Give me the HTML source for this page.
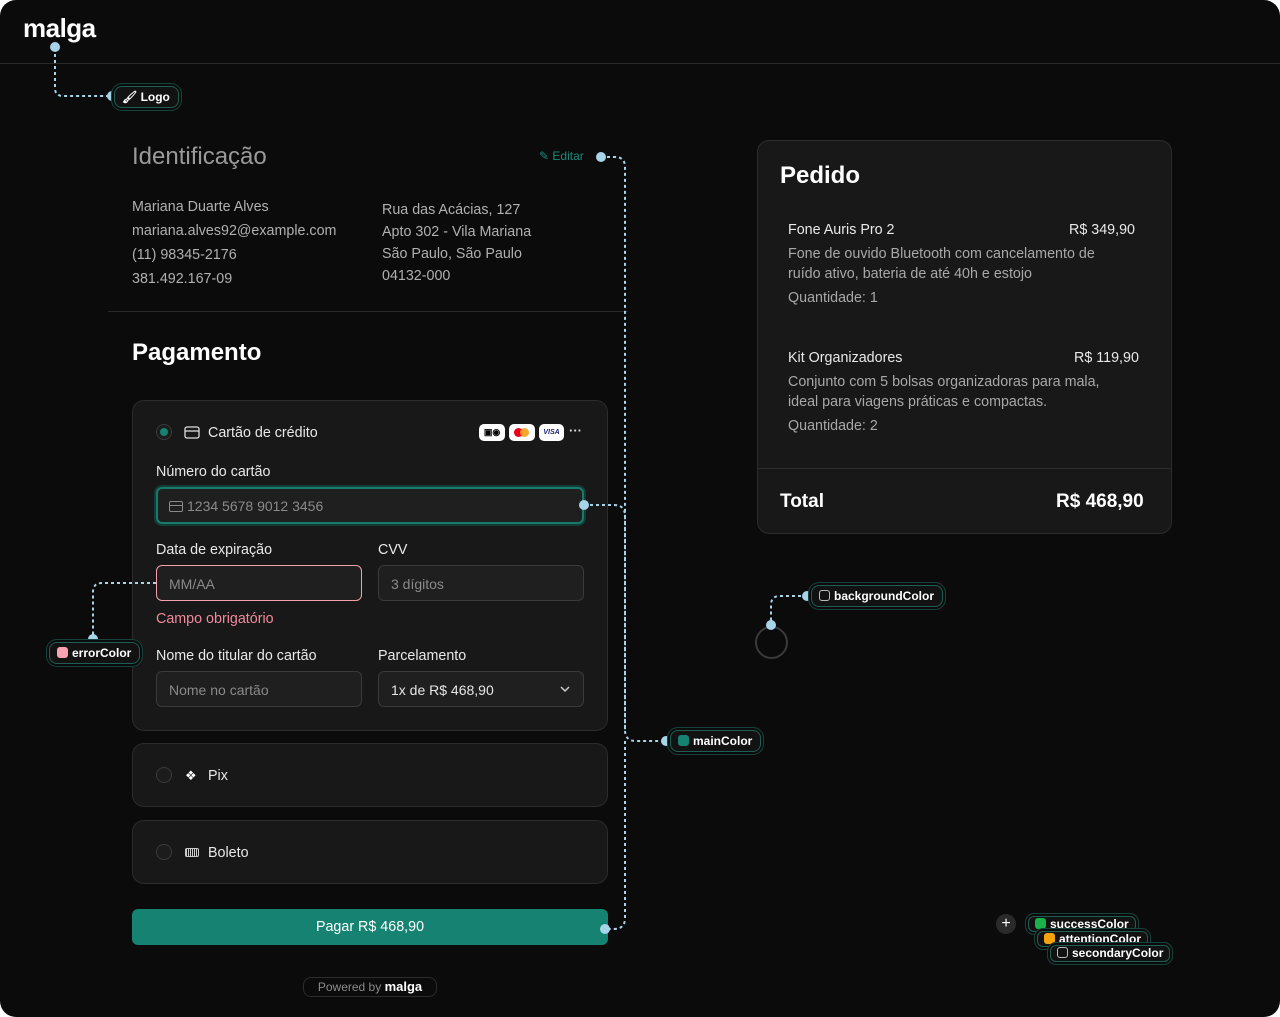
<!DOCTYPE html>
<html><head><meta charset="utf-8"><style>
*{box-sizing:border-box;margin:0;padding:0}
body{width:1280px;height:1017px;background:#fff;font-family:"Liberation Sans",sans-serif;position:relative;overflow:hidden;color:#e6e6e6}
.frame{position:absolute;left:0;top:0;width:1280px;height:1017px;background:#0b0b0b;border-radius:16px}
.a{position:absolute;white-space:nowrap}
.card{position:absolute;background:#181818;border:1px solid #2c2c2c;border-radius:12px}
.inp{position:absolute;background:#1f1f1f;border:1px solid #3a3a3a;border-radius:6px;height:36px;font-size:14px;color:#8a8a8a;padding:10px 12px}
.lbl{font-size:14.3px;color:#e8e8e8}
.g{color:#a8a8a8;font-size:14.3px}
.radio{position:absolute;width:16px;height:16px;border-radius:50%;border:1px solid #3a3a3a;background:#1c1c1c}
.tag{position:absolute;height:22px;border:1px solid #1f5e53;border-radius:8px;background:#121212;box-shadow:0 0 0 2px #0b0b0b,0 0 0 3px #16443c;font-size:12px;font-weight:bold;color:#fff;padding:3px 8px 0 7px;white-space:nowrap}
.sm{height:16px;padding:0 6px;line-height:14px;border-radius:6px}
.sw{display:inline-block;width:11px;height:11px;border-radius:3px;vertical-align:-1px;margin-right:4px}
</style></head><body>
<div class="frame"></div>
<div class="a" style="left:23px;top:13px;font-size:26px;font-weight:bold;color:#fff;letter-spacing:-0.5px">malga</div>
<div class="a" style="left:0;top:63px;width:1280px;height:1px;background:#2a2a2a"></div>

<div class="a" style="left:132px;top:143px;font-size:24px;color:#9a9a9a">Identificação</div>
<div class="a" style="left:539px;top:149px;font-size:12px;color:#1c8a78">✎ Editar</div>
<div class="a g" style="left:132px;top:195px;line-height:24px;color:#b0b0b0">Mariana Duarte Alves<br>mariana.alves92@example.com<br>(11) 98345-2176<br>381.492.167-09</div>
<div class="a g" style="left:382px;top:199px;line-height:22px;color:#b0b0b0">Rua das Acácias, 127<br>Apto 302 - Vila Mariana<br>São Paulo, São Paulo<br>04132-000</div>
<div class="a" style="left:108px;top:311px;width:520px;height:1px;background:#2a2a2a"></div>
<div class="a" style="left:132px;top:339px;font-size:24px;font-weight:bold;color:#fff">Pagamento</div>

<div class="card" style="left:132px;top:400px;width:476px;height:331px"></div>
<div class="radio" style="left:156px;top:424px"><div style="position:absolute;left:3px;top:3px;width:8px;height:8px;border-radius:50%;background:#168272"></div></div>
<svg class="a" style="left:184px;top:426px" width="16" height="13"><rect x="1" y="1" width="14" height="11" rx="2" fill="none" stroke="#ddd" stroke-width="1.3"/><line x1="1" y1="5" x2="15" y2="5" stroke="#ddd" stroke-width="1.3"/></svg>
<div class="a lbl" style="left:208px;top:425px">Cartão de crédito</div>
<div class="a" style="left:479px;top:424px;width:26px;height:17px;background:#fff;border-radius:5px;font-size:9px;color:#000;text-align:center;line-height:17px;font-weight:bold">▣◉</div>
<div class="a" style="left:509px;top:424px;width:26px;height:17px;background:#fff;border-radius:5px"><div style="position:absolute;left:5px;top:4px;width:9px;height:9px;border-radius:50%;background:#eb001b"></div><div style="position:absolute;left:11px;top:4px;width:9px;height:9px;border-radius:50%;background:#f79e1b;opacity:.9"></div></div>
<div class="a" style="left:539px;top:424px;width:25px;height:17px;background:#fff;border-radius:5px;font-size:7px;color:#1a1f71;text-align:center;line-height:17px;font-weight:bold;font-style:italic">VISA</div>
<div class="a" style="left:569px;top:423px;font-size:13px;color:#ddd;font-weight:bold">···</div>

<div class="a lbl" style="left:156px;top:464px">Número do cartão</div>
<div class="inp" style="left:156px;top:487px;width:428px;height:37px;border:2px solid #177a6b;box-shadow:0 0 0 2px #123d36;color:#8a8a8a;padding:9px 11px"><span style="display:inline-block;width:14px;height:11px;border:1.3px solid #888;border-radius:2px;vertical-align:-1px;margin-right:4px;background:linear-gradient(#888,#888) 0 3px/100% 1.3px no-repeat"></span>1234 5678 9012 3456</div>

<div class="a lbl" style="left:156px;top:542px">Data de expiração</div>
<div class="a lbl" style="left:378px;top:542px">CVV</div>
<div class="inp" style="left:156px;top:565px;width:206px;border-color:#f4a1ad">MM/AA</div>
<div class="inp" style="left:378px;top:565px;width:206px">3 dígitos</div>
<div class="a" style="left:156px;top:611px;font-size:14.3px;color:#f08a9a">Campo obrigatório</div>

<div class="a lbl" style="left:156px;top:648px">Nome do titular do cartão</div>
<div class="a lbl" style="left:378px;top:648px">Parcelamento</div>
<div class="inp" style="left:156px;top:671px;width:206px">Nome no cartão</div>
<div class="inp" style="left:378px;top:671px;width:206px;color:#e6e6e6">1x de R$ 468,90<svg style="position:absolute;right:12px;top:13px" width="12" height="8"><path d="M2 2l4 4 4-4" fill="none" stroke="#ccc" stroke-width="1.5"/></svg></div>

<div class="card" style="left:132px;top:743px;width:476px;height:64px"></div>
<div class="radio" style="left:156px;top:767px"></div>
<div class="a" style="left:185px;top:768px;font-size:13px;color:#fff">❖</div>
<div class="a lbl" style="left:208px;top:768px">Pix</div>
<div class="card" style="left:132px;top:820px;width:476px;height:64px"></div>
<div class="radio" style="left:156px;top:844px"></div>
<div class="a" style="left:185px;top:848px;width:14px;height:9px;border:1.3px solid #ccc;border-radius:2px;background:repeating-linear-gradient(90deg,#ccc 0 1px,transparent 1px 2px)"></div>
<div class="a lbl" style="left:208px;top:845px">Boleto</div>

<div class="a" style="left:132px;top:909px;width:476px;height:36px;background:#168272;border-radius:6px;text-align:center;line-height:36px;font-size:14.3px;color:#fff">Pagar R$ 468,90</div>
<div class="a" style="left:303px;top:977px;width:134px;height:20px;border:1px solid #2c2c2c;border-radius:8px;font-size:12px;color:#8a8a8a;text-align:center;line-height:18px">Powered by <b style="color:#fff;font-size:13px">malga</b></div>

<div class="card" style="left:757px;top:140px;width:415px;height:394px"></div>
<div class="a" style="left:780px;top:162px;font-size:24px;font-weight:bold;color:#fff">Pedido</div>
<div class="a lbl" style="left:788px;top:222px">Fone Auris Pro 2</div>
<div class="a lbl" style="left:1069px;top:222px">R$ 349,90</div>
<div class="a g" style="left:788px;top:244px;line-height:20px">Fone de ouvido Bluetooth com cancelamento de<br>ruído ativo, bateria de até 40h e estojo</div>
<div class="a g" style="left:788px;top:290px">Quantidade: 1</div>
<div class="a lbl" style="left:788px;top:350px">Kit Organizadores</div>
<div class="a lbl" style="left:1074px;top:350px">R$ 119,90</div>
<div class="a g" style="left:788px;top:372px;line-height:20px">Conjunto com 5 bolsas organizadoras para mala,<br>ideal para viagens práticas e compactas.</div>
<div class="a g" style="left:788px;top:418px">Quantidade: 2</div>
<div class="a" style="left:757px;top:468px;width:415px;height:1px;background:#2c2c2c"></div>
<div class="a" style="left:780px;top:491px;font-size:19px;font-weight:bold;color:#fff">Total</div>
<div class="a" style="left:1056px;top:491px;font-size:19px;font-weight:bold;color:#fff">R$ 468,90</div>

<div class="a" style="left:755px;top:626px;width:33px;height:33px;border-radius:50%;border:2px solid #3a3a3a"></div>

<svg class="a" style="left:0;top:0" width="1280" height="1017">
<g fill="none" stroke="#a8d4ea" stroke-width="2" stroke-dasharray="3 3">
<path d="M55 48V88q0 8 8 8H112"/>
<path d="M601 157h14q10 0 10 10V730q0 11 11 11H665"/>
<path d="M584 505h30q11 0 11 11V730"/>
<path d="M625 741V918q0 11-11 11H605"/>
<path d="M156 583H102q-9 0-9 9V639"/>
<path d="M807 596H780q-9 0-9 9V625"/>
</g>
<g fill="#a8d4ea"><circle cx="55" cy="47" r="5"/><circle cx="112" cy="96" r="5"/><circle cx="601" cy="157" r="5"/><circle cx="584" cy="505" r="5"/><circle cx="666" cy="741" r="5"/><circle cx="605" cy="929" r="5"/><circle cx="93" cy="639" r="5"/><circle cx="807" cy="596" r="5"/><circle cx="771" cy="625" r="5"/></g>
</svg>

<div class="tag" style="left:114px;top:86px">🖌 Logo</div>
<div class="tag" style="left:49px;top:642px"><span class="sw" style="background:#f7a1b1"></span>errorColor</div>
<div class="tag" style="left:670px;top:730px"><span class="sw" style="background:#168272"></span>mainColor</div>
<div class="tag" style="left:811px;top:585px"><span class="sw" style="border:1.3px solid #bbb"></span>backgroundColor</div>
<div class="a" style="left:996px;top:914px;width:20px;height:20px;border-radius:50%;background:#2a2a2a;color:#fff;text-align:center;line-height:20px;font-size:16px">+</div>
<div class="tag sm" style="left:1028px;top:916px"><span class="sw" style="background:#1ab34a"></span>successColor</div>
<div class="tag sm" style="left:1037px;top:931px"><span class="sw" style="background:#f5a30a"></span>attentionColor</div>
<div class="tag sm" style="left:1050px;top:945px;height:17px;line-height:15px"><span class="sw" style="border:1.3px solid #bbb"></span>secondaryColor</div>
</body></html>
